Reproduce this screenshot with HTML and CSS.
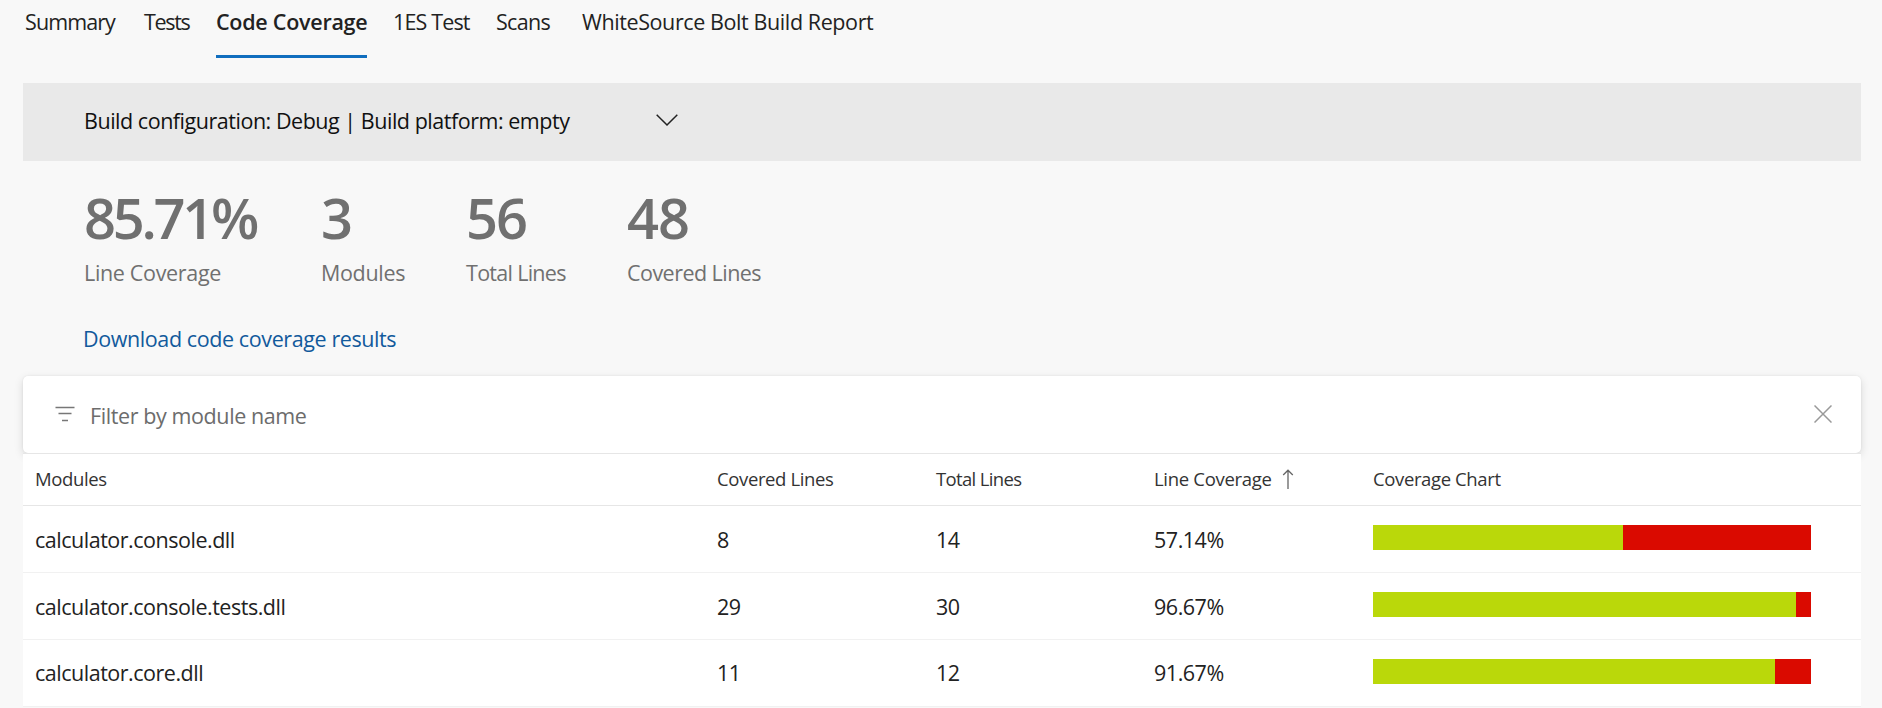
FILE: index.html
```html
<!DOCTYPE html>
<html lang="en">
<head>
<meta charset="utf-8">
<title>Code Coverage</title>
<link rel="stylesheet" href="styles.css">
</head>
<body>
<nav class="tabs">
  <a class="tab tab-summary">Summary</a>
  <a class="tab tab-tests">Tests</a>
  <a class="tab tab-active">Code Coverage</a>
  <a class="tab tab-es">1ES Test</a>
  <a class="tab tab-scans">Scans</a>
  <a class="tab tab-report">WhiteSource Bolt Build Report</a>
</nav>
<main class="content">
  <div class="config">
    <span class="config-text">Build configuration: Debug | Build platform: empty</span>
    <svg class="chevron" width="24" height="14" viewBox="0 0 24 14"><path d="M1.7 1.7 12 12 22.3 1.7"/></svg>
  </div>
  <section class="stats">
    <div><div class="num num-percent">85.71%</div><div class="label">Line Coverage</div></div>
    <div><div class="num">3</div><div class="label">Modules</div></div>
    <div><div class="num num-total">56</div><div class="label label-total">Total Lines</div></div>
    <div><div class="num">48</div><div class="label label-covered">Covered Lines</div></div>
  </section>
  <a class="download">Download code coverage results</a>
  <div class="filter">
    <svg class="filter-icon" width="20" height="16" viewBox="0 0 20 16"><path d="M0.5 1.5H19.5M3.5 7.5H16.5M7 14.5H13"/></svg>
    <span class="filter-text">Filter by module name</span>
    <svg class="close" width="18" height="18" viewBox="0 0 18 18"><path d="M.5.5 17.5 17.5M17.5.5.5 17.5"/></svg>
  </div>
  <section class="table">
    <div class="row head">
      <span>Modules</span>
      <span>Covered Lines</span>
      <span class="head-total">Total Lines</span>
      <span class="head-sort">Line Coverage<svg class="arrow" width="12" height="20" viewBox="0 0 12 20"><path d="M6 20V1.2M1.2 6 6 1.2 10.8 6"/></svg></span>
      <span>Coverage Chart</span>
    </div>
    <div class="row">
      <span>calculator.console.dll</span><span>8</span><span>14</span><span>57.14%</span>
      <div class="bar"><div class="covered" style="width:57.14%"></div></div>
    </div>
    <div class="row">
      <span>calculator.console.tests.dll</span><span>29</span><span>30</span><span>96.67%</span>
      <div class="bar"><div class="covered" style="width:96.67%"></div></div>
    </div>
    <div class="row">
      <span>calculator.core.dll</span><span>11</span><span>12</span><span>91.67%</span>
      <div class="bar"><div class="covered" style="width:91.67%"></div></div>
    </div>
  </section>
</main>
</body>
</html>
```
FILE: styles.css
```css
* { box-sizing: border-box; }
body {
  margin: 0;
  height: 708px;
  overflow: hidden;
  background: #f8f8f8;
  color: #222;
  font: 21.5px/30px "Open Sans", "Noto Sans", sans-serif;
  letter-spacing: -0.48px;
  white-space: nowrap;
}
svg { display: block; flex: none; fill: none; }
.tabs {
  display: grid;
  grid-template-columns: 119px 72px 177px 103px 86px 1fr;
  height: 83px;
  padding: 7px 0 0 25px;
}
.tab { justify-self: start; height: 51px; }
.tab-summary { letter-spacing: -0.9px; }
.tab-tests { letter-spacing: -1.3px; }
.tab-active {
  width: 151px;
  border-bottom: 3px solid #106ebe;
  font-weight: 600;
  letter-spacing: -0.26px;
}
.tab-es { letter-spacing: -0.85px; }
.tab-scans { letter-spacing: -0.7px; }
.tab-report { letter-spacing: -0.4px; }
.content { margin: 0 21px 0 23px; }
.config {
  display: flex;
  align-items: center;
  height: 78px;
  padding-left: 61px;
  background: #e9e9e9;
  color: #111;
}
.config-text { width: 571px; margin-top: -2px; letter-spacing: -0.47px; }
.chevron { margin-top: -4px; stroke: #222; stroke-width: 1.5; }
.stats {
  display: grid;
  grid-template-columns: 237px 145px 161px 1fr;
  padding: 26px 0 0 61px;
  color: #707070;
}
.num { font-size: 56px; font-weight: 600; line-height: 60px; letter-spacing: -1px; }
.num-percent { letter-spacing: -3.3px; }
.num-total { letter-spacing: -2px; }
.label { margin-top: 11px; letter-spacing: -0.33px; }
.label-total { letter-spacing: -0.71px; }
.label-covered { letter-spacing: -0.54px; }
.download {
  display: block;
  margin: 36px 0 22px 60px;
  color: #125a9c;
  letter-spacing: -0.4px;
}
.filter {
  position: relative;
  display: flex;
  align-items: center;
  height: 77px;
  padding: 0 30px 0 32px;
  border-radius: 5px;
  background: #fff;
  color: #6c6c6c;
  box-shadow: 0 3px 10px rgba(0, 0, 0, .13), 0 0 2px rgba(0, 0, 0, .08);
}
.filter-icon { margin-top: -2px; stroke: #777; stroke-width: 1.3; }
.filter-text { flex: 1; margin: 3px 0 0 15px; letter-spacing: -0.4px; }
.close { margin: -1px -1px 0 0; stroke: #999; stroke-width: 1.5; }
.table { position: relative; border-top: 1px solid #e6e6e6; background: #fff; }
.row {
  display: grid;
  grid-template-columns: 682px 219px 218px 219px 438px;
  height: 67px;
  padding-left: 12px;
  border-bottom: 1px solid #f1f1f1;
  line-height: 68px;
}
.row:last-child { line-height: 66px; }
.head {
  height: 52px;
  border-bottom-color: #e6e6e6;
  color: #333;
  font-size: 18.5px;
  line-height: 50px;
  letter-spacing: -0.38px;
}
.head-total { letter-spacing: -0.65px; }
.head-sort { display: flex; letter-spacing: -0.3px; }
.arrow { margin: 15px 0 0 10px; stroke: #666; stroke-width: 1.3; }
.bar { height: 25px; margin-top: 19px; background: #da0a00; }
.covered { height: 100%; background: #bad80a; }
```
